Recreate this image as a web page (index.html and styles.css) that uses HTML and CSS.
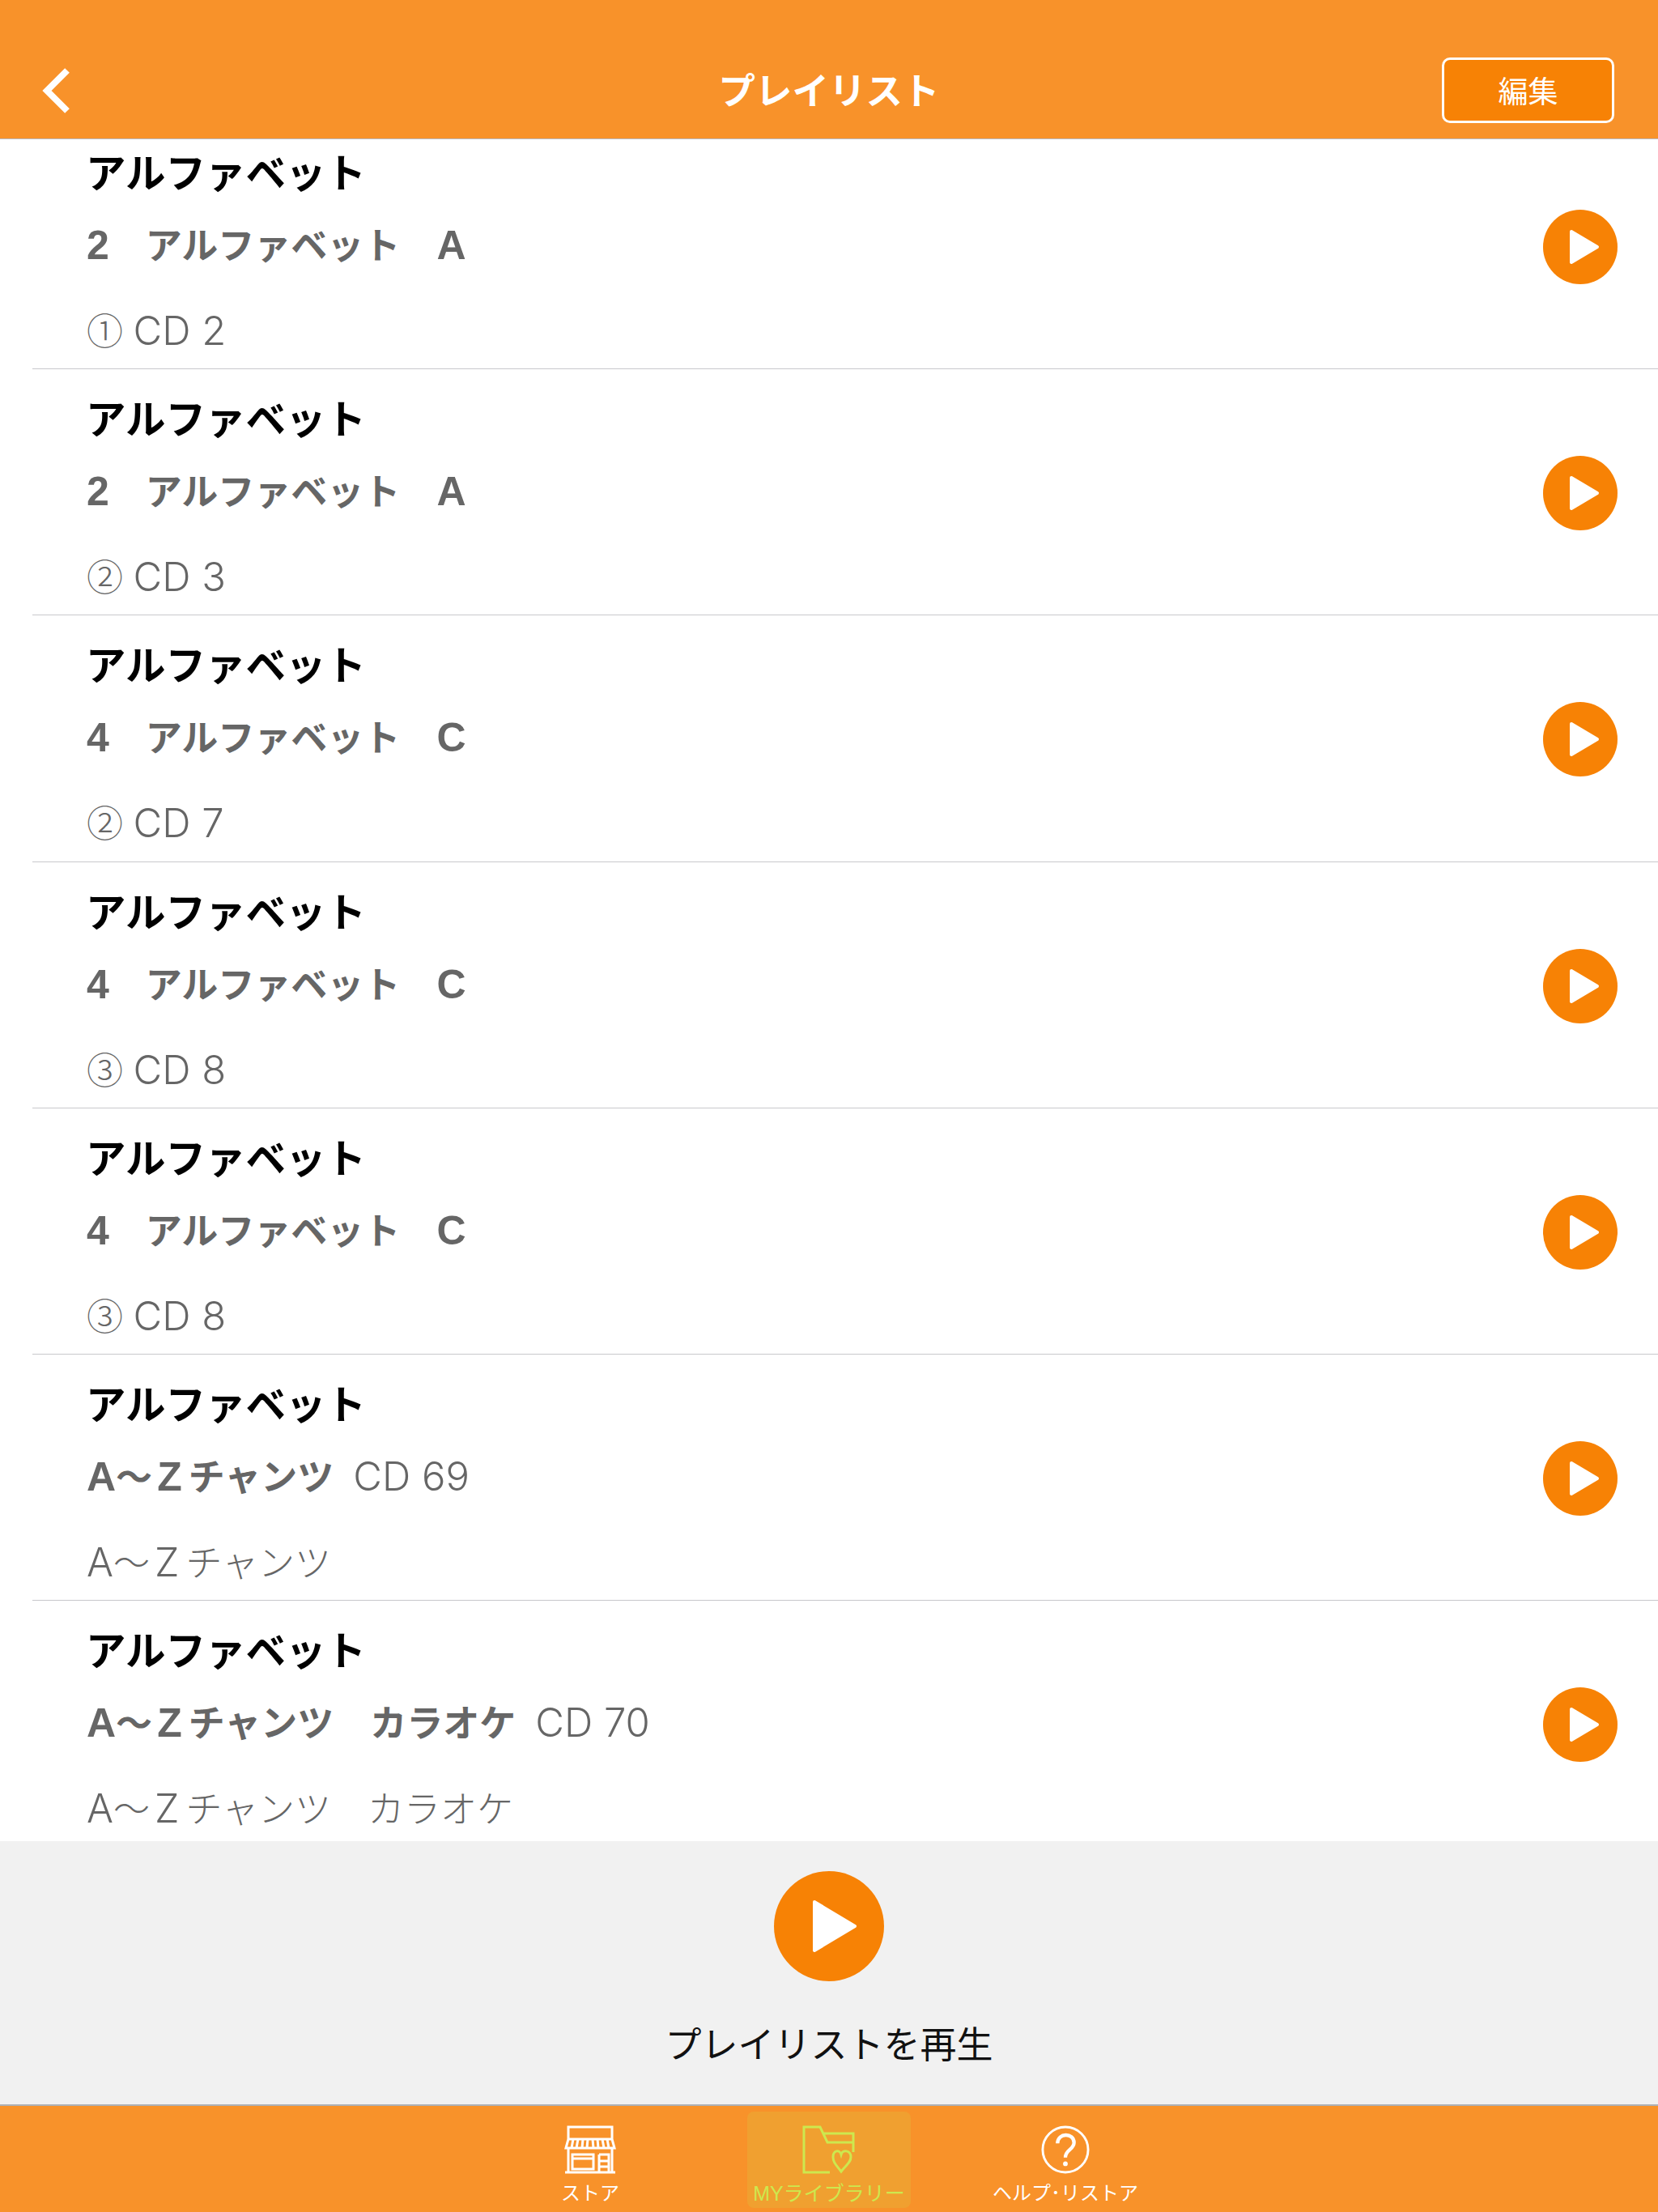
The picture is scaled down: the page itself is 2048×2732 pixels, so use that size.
FILE: index.html
```html
<!DOCTYPE html>
<html lang="ja">

<head>
    <meta charset="UTF-8">
    <title>プレイリスト</title>
    <link rel="stylesheet" href="styles.css">
</head>

<body>

    <header class="topbar">
        <svg class="back" viewBox="0 0 36 56"><path d="M31 3 L6 28 L31 53" /></svg>
        <h1 class="title">プレイリスト</h1>
        <button class="edit">編集</button>
    </header>

    <main class="list">
        <div class="rows">
            <div class="row">
                <div class="info">
                    <p class="name">アルファベット</p>
                    <p class="track"><b><span class="lat">2</span>　アルファベット　<span class="lat">A</span></b></p>
                    <p class="sub">① <span class="thin">CD 2</span></p>
                </div>
                <svg class="play" viewBox="0 0 92 92"><circle cx="46" cy="46" r="46" /><path d="M35 27 L67 46 L35 65 Z" /></svg>
            </div>
            <div class="row">
                <div class="info">
                    <p class="name">アルファベット</p>
                    <p class="track"><b><span class="lat">2</span>　アルファベット　<span class="lat">A</span></b></p>
                    <p class="sub">② <span class="thin">CD 3</span></p>
                </div>
                <svg class="play" viewBox="0 0 92 92"><circle cx="46" cy="46" r="46" /><path d="M35 27 L67 46 L35 65 Z" /></svg>
            </div>
            <div class="row">
                <div class="info">
                    <p class="name">アルファベット</p>
                    <p class="track"><b><span class="lat">4</span>　アルファベット　<span class="lat">C</span></b></p>
                    <p class="sub">② <span class="thin">CD 7</span></p>
                </div>
                <svg class="play" viewBox="0 0 92 92"><circle cx="46" cy="46" r="46" /><path d="M35 27 L67 46 L35 65 Z" /></svg>
            </div>
            <div class="row">
                <div class="info">
                    <p class="name">アルファベット</p>
                    <p class="track"><b><span class="lat">4</span>　アルファベット　<span class="lat">C</span></b></p>
                    <p class="sub">③ <span class="thin">CD 8</span></p>
                </div>
                <svg class="play" viewBox="0 0 92 92"><circle cx="46" cy="46" r="46" /><path d="M35 27 L67 46 L35 65 Z" /></svg>
            </div>
            <div class="row">
                <div class="info">
                    <p class="name">アルファベット</p>
                    <p class="track"><b><span class="lat">4</span>　アルファベット　<span class="lat">C</span></b></p>
                    <p class="sub">③ <span class="thin">CD 8</span></p>
                </div>
                <svg class="play" viewBox="0 0 92 92"><circle cx="46" cy="46" r="46" /><path d="M35 27 L67 46 L35 65 Z" /></svg>
            </div>
            <div class="row">
                <div class="info">
                    <p class="name">アルファベット</p>
                    <p class="track"><b><span class="lat">A</span>～<span class="lat end">Z</span>チャンツ</b><span class="thin cd">CD 69</span></p>
                    <p class="sub"><span class="thin">A</span>～<span class="thin end">Z</span>チャンツ</p>
                </div>
                <svg class="play" viewBox="0 0 92 92"><circle cx="46" cy="46" r="46" /><path d="M35 27 L67 46 L35 65 Z" /></svg>
            </div>
            <div class="row">
                <div class="info">
                    <p class="name">アルファベット</p>
                    <p class="track"><b><span class="lat">A</span>～<span class="lat end">Z</span>チャンツ　カラオケ</b><span class="thin cd">CD 70</span></p>
                    <p class="sub"><span class="thin">A</span>～<span class="thin end">Z</span>チャンツ　カラオケ</p>
                </div>
                <svg class="play" viewBox="0 0 92 92"><circle cx="46" cy="46" r="46" /><path d="M35 27 L67 46 L35 65 Z" /></svg>
            </div>
        </div>
    </main>

    <section class="player">
        <svg class="play-all" viewBox="0 0 136 136"><circle cx="68" cy="68" r="68" /><path d="M50 38 L100 68 L50 98 Z" /></svg>
        <p class="play-label">プレイリストを再生</p>
    </section>

    <nav class="tabbar">
        <div class="tab store">
            <svg class="tab-icon" viewBox="0 0 66 60">
                <path d="M6 2 H60 V17 H6 Z M3 28 L6 17 H60 L63 28 Z M12 17 L10 28 M18 17 L16 28 M24 17 L23 28 M30 17 L29 28 M36 17 L37 28 M42 17 L43 28 M48 17 L50 28 M54 17 L56 28" />
                <path d="M6 28 V58 M60 28 V58 M2 58 H64 M11 36 H37 V54 H11 Z M11 41 H37 M44 36 H56 V58 M44 36 V58 M44 44 H56 M44 51 H56" />
            </svg>
            <span class="tab-label">ストア</span>
        </div>
        <div class="tab active">
            <svg class="tab-icon" viewBox="0 0 66 60">
                <path d="M34 58 H2 V2 H22 L31 21 H63 V10 H26 M63 21 V33" />
                <path d="M48 57 C42 49 38 46 38 39 C38 31 46 29 48 36 C50 29 60 31 60 39 C60 46 54 49 48 57 Z" />
            </svg>
            <span class="tab-label">MYライブラリー</span>
        </div>
        <div class="tab">
            <svg class="tab-icon help" viewBox="0 0 62 62">
                <circle cx="31" cy="31" r="29" />
                <path class="mark" d="M21 23 C21 9 42 9 42 22 C42 31 31 31 31 41" />
                <circle class="dot" cx="31" cy="49" r="3" />
            </svg>
            <span class="tab-label">ヘルプ･リストア</span>
        </div>
    </nav>

</body>

</html>
```

FILE: styles.css
```css
* {
    box-sizing: border-box;
}

body {
    margin: 0;
    height: 2732px;
    display: flex;
    flex-direction: column;
    background-color: #ffffff;
    font-family: "Liberation Sans", "Noto Sans CJK JP", sans-serif;
    overflow: hidden;
}

p {
    margin: 0;
}

.topbar {
    height: 172px;
    flex-shrink: 0;
    display: flex;
    align-items: flex-end;
    justify-content: space-between;
    padding: 0 54px 19px 52px;
    background-color: #f8922a;
    border-bottom: 1px solid #b9b9c0;
    position: relative;
}

.back {
    width: 36px;
    height: 56px;
    margin-bottom: 12px;
    fill: none;
    stroke: #ffffff;
    stroke-width: 8;
}

.title {
    position: absolute;
    left: 0;
    right: 0;
    top: 84px;
    margin: 0;
    text-align: center;
    color: #ffffff;
    font-size: 45.5px;
    line-height: 60px;
    font-weight: bold;
}

.edit {
    width: 213px;
    height: 81px;
    padding: 0 0 2px;
    background-color: #f78205;
    border: 3px solid #ffffff;
    border-radius: 10px;
    color: #ffffff;
    font-family: inherit;
    font-size: 37px;
}

.list {
    flex: 1;
    min-height: 0;
    overflow: hidden;
}

.rows {
    margin-top: -20px;
}

.row {
    height: 304.2px;
    margin-left: 40px;
    padding: 31px 50px 0 67px;
    display: flex;
    justify-content: space-between;
    border-bottom: 1px solid #c8c8cc;
}

.row:last-child {
    border-bottom: none;
}

.name {
    margin-left: -1px;
    color: #000000;
    font-size: 49.5px;
    line-height: 64px;
    font-weight: bold;
}

.track {
    margin-top: 28px;
    color: #666666;
    font-size: 45px;
    line-height: 60px;
    white-space: nowrap;
}

.sub {
    margin-top: 46px;
    color: #666666;
    font-size: 45px;
    font-weight: 300;
    line-height: 60px;
    white-space: nowrap;
}

/* latin letters in the list are drawn larger than the kana next to them */
.lat {
    font-size: 50px;
    line-height: 1;
}

.thin {
    margin-left: 2px;
    font-family: "Inter", "Liberation Sans", sans-serif;
    font-size: 49px;
    font-weight: 300;
    line-height: 1;
}

.sub .thin:first-child {
    margin-left: 0;
}

.end {
    margin: 0 8px 0 6px;
}

.cd {
    margin-left: 24px;
}

.play {
    width: 92px;
    height: 92px;
    margin-top: 76px;
    flex-shrink: 0;
}

.play circle,
.play-all circle {
    fill: #f78205;
}

.play path,
.play-all path {
    fill: #ffffff;
    stroke: #ffffff;
    stroke-width: 4;
    stroke-linejoin: round;
}

.player {
    height: 325px;
    flex-shrink: 0;
    display: flex;
    flex-direction: column;
    align-items: center;
    padding-top: 37px;
    background-color: #f1f1f1;
}

.play-all {
    width: 136px;
    height: 136px;
}

.play-label {
    margin-top: 50px;
    color: #111111;
    font-size: 45px;
    line-height: 60px;
}

.tabbar {
    height: 133px;
    flex-shrink: 0;
    display: flex;
    justify-content: center;
    padding-top: 7px;
    gap: 90px;
    background-color: #f8922a;
    border-top: 2px solid #aeb0b4;
}

.tab {
    width: 202px;
    height: 119px;
    display: flex;
    flex-direction: column;
    align-items: center;
    padding-top: 17px;
    border-radius: 8px;
    color: #ffffff;
}

.tab.store {
    margin: 0 3px 0 -3px;
}

.tab.active {
    background-color: #f0a030;
    color: #cde84e;
}

.tab-icon {
    width: 66px;
    height: 60px;
    fill: none;
    stroke: currentColor;
    stroke-width: 3;
}

.tab-icon .mark {
    stroke-width: 4.5;
}

.tab-icon .dot {
    fill: currentColor;
    stroke: none;
}

.tab-label {
    margin-top: 7px;
    font-size: 24px;
    line-height: 34px;
    white-space: nowrap;
}

.tab.active .tab-label {
    font-size: 25px;
}
```
